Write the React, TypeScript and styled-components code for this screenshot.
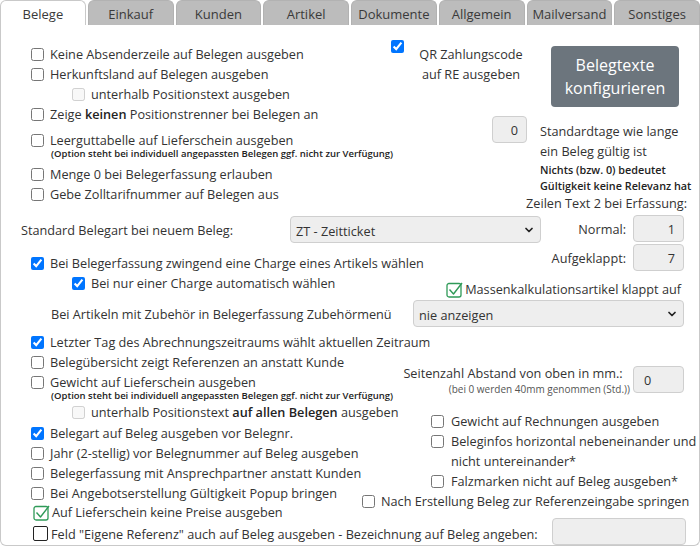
import React from "react";
import styled, { createGlobalStyle } from "styled-components";
import { ChevronDown } from "lucide-react";

const Global = createGlobalStyle`
  html, body { margin: 0; padding: 0; background: #fff; }
  body {
    font-family: "Open Sans", "Liberation Sans", sans-serif;
    font-size: 12.7px;
    color: #333;
  }
  * { box-sizing: border-box; }
`;

const Frame = styled.div`
  width: 700px;
  height: 546px;
  display: flex;
  flex-direction: column;
  overflow: hidden;
`;

const TabBar = styled.div`
  display: flex;
  gap: 2px;
  height: 25px;
  flex: none;
`;

const Tab = styled.div<{ $active?: boolean }>`
  flex: 1;
  display: flex;
  align-items: center;
  justify-content: center;
  border: 1px solid ${(p) => (p.$active ? "#c9c9c9" : "#b2b2b2")};
  border-bottom: none;
  border-radius: 6px 6px 0 0;
  background: ${(p) => (p.$active ? "#fff" : "#bcbcbc")};
  color: #3a3a3a;
  font-size: 13px;
  padding-top: 1px;
`;

const Panel = styled.div`
  flex: 1;
  border: 1px solid #c9c9c9;
  border-top: none;
  border-radius: 0 0 6px 6px;
  display: flex;
  flex-direction: column;
`;

const SplitBand = styled.div<{ $cols: string }>`
  display: grid;
  grid-template-columns: ${(p) => p.$cols};
  align-items: start;
`;

const Column = styled.div<{ $pt?: number }>`
  display: flex;
  flex-direction: column;
  padding-top: ${(p) => p.$pt ?? 0}px;
  min-width: 0;
`;

const CheckRow = styled.label<{ $indent?: number; $mt?: number; $gap?: number }>`
  display: flex;
  align-items: flex-start;
  gap: ${(p) => p.$gap ?? 6}px;
  padding-left: ${(p) => p.$indent ?? 30}px;
  margin-top: ${(p) => p.$mt ?? 0}px;
  line-height: 20px;
  white-space: nowrap;
`;

const Box = styled.input.attrs({ type: "checkbox" })`
  margin: 4px 0 0 0;
  width: 13px;
  height: 13px;
  flex: none;
`;

const Strong = styled.b`
  font-weight: 600;
  color: #222;
`;

const Note = styled.div<{ $indent?: number; $mt?: number }>`
  padding-left: ${(p) => p.$indent ?? 50}px;
  margin-top: ${(p) => p.$mt ?? -2}px;
  font-size: 9.5px;
  font-weight: 600;
  line-height: 11px;
  color: #222;
  white-space: nowrap;
`;

const QrRow = styled.div`
  display: flex;
  align-items: flex-start;
`;

const QrBox = styled(Box)`
  margin-top: 15px;
`;

const QrText = styled.div`
  width: 124px;
  margin-left: 5px;
  padding-top: 19px;
  line-height: 20px;
  text-align: center;
`;

const ConfigButton = styled.button`
  margin: 21px 0 0 18px;
  width: 128px;
  height: 61px;
  border: none;
  border-radius: 4px;
  background: #6c757d;
  color: #fff;
  font-family: inherit;
  font-size: 16px;
  line-height: 23px;
  padding: 0;
`;

const InfoRow = styled.div`
  display: flex;
  align-items: flex-start;
  margin-top: 9px;
`;

const NumInput = styled.input<{ $w: number; $left?: boolean }>`
  width: ${(p) => p.$w}px;
  height: 27px;
  flex: none;
  border: 1px solid #cfcfcf;
  border-radius: 4px;
  background: #eeeeee;
  font-family: inherit;
  font-size: 12.7px;
  color: #333;
  text-align: ${(p) => (p.$left ? "left" : "right")};
  padding: ${(p) => (p.$left ? "0 0 0 10px" : "0 8px 0 0")};
  margin: 0;
`;

const InfoInput = styled(NumInput)`
  margin-left: 101px;
`;

const InfoText = styled.div`
  margin-left: 13px;
  padding-top: 5px;
  line-height: 20px;
  white-space: nowrap;
`;

const InfoSmall = styled.div`
  font-size: 10.8px;
  font-weight: 600;
  line-height: 16px;
  color: #222;
  padding-top: 1px;
  margin-bottom: -1px;
`;

const RightLine = styled.div`
  text-align: right;
  padding-right: 12px;
  line-height: 20px;
  white-space: nowrap;
`;

const FieldRow = styled.div<{ $mt?: number }>`
  display: flex;
  align-items: center;
  justify-content: flex-end;
  gap: 7px;
  padding-right: 15px;
  margin-top: ${(p) => p.$mt ?? 0}px;
`;

const SelectLine = styled.div<{ $mt?: number; $indent: number }>`
  display: flex;
  align-items: center;
  padding-left: ${(p) => p.$indent}px;
  padding-right: 15px;
  margin-top: ${(p) => p.$mt ?? 0}px;
  white-space: nowrap;
`;

const SelectLabel = styled.span<{ $w?: number }>`
  flex: ${(p) => (p.$w ? "none" : "1")};
  width: ${(p) => (p.$w ? `${p.$w}px` : "auto")};
`;

const SelectWrap = styled.div<{ $w: number }>`
  position: relative;
  width: ${(p) => p.$w}px;
  height: 27px;
  flex: none;
`;

const Select = styled.select`
  appearance: none;
  width: 100%;
  height: 100%;
  margin: 0;
  border: 1px solid #cfcfcf;
  border-radius: 4px;
  background: #eeeeee;
  font-family: inherit;
  font-size: 12.7px;
  color: #333;
  padding: 2px 0 0 5px;
`;

const Chevron = styled(ChevronDown)`
  position: absolute;
  right: 6px;
  top: 8px;
  pointer-events: none;
  color: #222;
`;

const SplitRow = styled.div`
  display: flex;
  justify-content: space-between;
  align-items: flex-start;
`;

const GreenRow = styled.label<{ $mt?: number; $indent?: number; $right?: number }>`
  display: flex;
  align-items: center;
  gap: 2px;
  margin-top: ${(p) => p.$mt ?? 0}px;
  padding-left: ${(p) => p.$indent ?? 0}px;
  padding-right: ${(p) => p.$right ?? 0}px;
  height: 17px;
  line-height: 17px;
  white-space: nowrap;
`;

const PlainBox = styled.span`
  width: 15px;
  height: 15px;
  flex: none;
  border: 1.5px solid #222;
  border-radius: 2px;
  margin-right: 1px;
`;

const SeitenRow = styled.div`
  display: flex;
  justify-content: flex-end;
  align-items: flex-start;
  gap: 7px;
  padding-right: 15px;
  margin-top: 11px;
`;

const SeitenLabel = styled.div`
  text-align: right;
  white-space: nowrap;
  line-height: 20px;
`;

const SeitenNote = styled.div`
  font-size: 10px;
  line-height: 12px;
  margin-top: 0;
  margin-right: -4px;
  color: #555;
`;

const SeitenInput = styled(NumInput)`
  margin-top: 3px;
`;

const BottomRow = styled.div`
  display: flex;
  align-items: center;
  justify-content: space-between;
  height: 28px;
  margin-top: -4px;
  padding-right: 13px;
`;

const BottomLabel = styled.label`
  display: flex;
  align-items: center;
  gap: 2px;
  padding: 5px 0 0 32px;
  white-space: nowrap;
`;

const GreenCheck = () => (
  <svg width="17" height="17" viewBox="0 0 17 17" style={{ flex: "none" }}>
    <rect x="1" y="2.5" width="14" height="13.5" rx="2" fill="none" stroke="#2f9a58" strokeWidth="1.3" />
    <polyline points="3.5,8.5 7.5,13 16,2" fill="none" stroke="#2f9a58" strokeWidth="1.4" strokeLinejoin="round" />
  </svg>
);

const tabs = ["Belege", "Einkauf", "Kunden", "Artikel", "Dokumente", "Allgemein", "Mailversand", "Sonstiges"];

export default function App() {
  return (
    <>
      <Global />
      <Frame>
        <TabBar>
          {tabs.map((t, i) => (
            <Tab key={t} $active={i === 0}>
              {t}
            </Tab>
          ))}
        </TabBar>
        <Panel>
          <SplitBand $cols="390px 1fr">
            <Column $pt={19}>
              <CheckRow><Box />Keine Absenderzeile auf Belegen ausgeben</CheckRow>
              <CheckRow><Box />Herkunftsland auf Belegen ausgeben</CheckRow>
              <CheckRow $indent={71}><Box disabled />unterhalb Positionstext ausgeben</CheckRow>
              <CheckRow><Box /><span>Zeige <Strong>keinen</Strong> Positionstrenner bei Belegen an</span></CheckRow>
              <CheckRow $mt={6}><Box />Leerguttabelle auf Lieferschein ausgeben</CheckRow>
              <Note>(Option steht bei individuell angepassten Belegen ggf. nicht zur Verfügung)</Note>
              <CheckRow $mt={5}><Box />Menge 0 bei Belegerfassung erlauben</CheckRow>
              <CheckRow><Box />Gebe Zolltarifnummer auf Belegen aus</CheckRow>
            </Column>
            <Column>
              <QrRow>
                <QrBox defaultChecked />
                <QrText>QR Zahlungscode<br />auf RE ausgeben</QrText>
                <ConfigButton>Belegtexte<br />konfigurieren</ConfigButton>
              </QrRow>
              <InfoRow>
                <InfoInput $w={35} defaultValue="0" />
                <InfoText>
                  Standardtage wie lange<br />
                  ein Beleg gültig ist
                  <InfoSmall>Nichts (bzw. 0) bedeutet<br />Gültigkeit keine Relevanz hat</InfoSmall>
                </InfoText>
              </InfoRow>
              <RightLine>Zeilen Text 2 bei Erfassung:</RightLine>
            </Column>
          </SplitBand>

          <SplitBand $cols="1fr 158px">
            <Column>
              <SelectLine $indent={20} $mt={3}>
                <SelectLabel $w={269}>Standard Belegart bei neuem Beleg:</SelectLabel>
                <SelectWrap $w={251}>
                  <Select defaultValue="zt">
                    <option value="zt">ZT - Zeitticket</option>
                  </Select>
                  <Chevron size={12} strokeWidth={3.5} />
                </SelectWrap>
              </SelectLine>
              <CheckRow $mt={10}><Box defaultChecked />Bei Belegerfassung zwingend eine Charge eines Artikels wählen</CheckRow>
            </Column>
            <Column>
              <FieldRow $mt={2}>Normal:<NumInput $w={51} defaultValue="1" /></FieldRow>
              <FieldRow $mt={2}>Aufgeklappt:<NumInput $w={51} defaultValue="7" /></FieldRow>
            </Column>
          </SplitBand>

          <SplitRow>
            <CheckRow $indent={71}><Box defaultChecked />Bei nur einer Charge automatisch wählen</CheckRow>
            <GreenRow $mt={8} $right={18}><GreenCheck />Massenkalkulationsartikel klappt auf</GreenRow>
          </SplitRow>

          <SelectLine $indent={50} $mt={2}>
            <SelectLabel>Bei Artikeln mit Zubehör in Belegerfassung Zubehörmenü</SelectLabel>
            <SelectWrap $w={271}>
              <Select defaultValue="nie">
                <option value="nie">nie anzeigen</option>
              </Select>
              <Chevron size={12} strokeWidth={3.5} />
            </SelectWrap>
          </SelectLine>

          <CheckRow $mt={5}><Box defaultChecked />Letzter Tag des Abrechnungszeitraums wählt aktuellen Zeitraum</CheckRow>

          <SplitBand $cols="359px 1fr">
            <Column>
              <CheckRow><Box />Belegübersicht zeigt Referenzen an anstatt Kunde</CheckRow>
              <CheckRow><Box />Gewicht auf Lieferschein ausgeben</CheckRow>
              <Note $mt={-2}>(Option steht bei individuell angepassten Belegen ggf. nicht zur Verfügung)</Note>
              <CheckRow $indent={71} $mt={1}><Box disabled /><span>unterhalb Positionstext <Strong>auf allen Belegen</Strong> ausgeben</span></CheckRow>
              <CheckRow $mt={1}><Box defaultChecked />Belegart auf Beleg ausgeben vor Belegnr.</CheckRow>
              <CheckRow><Box />Jahr (2-stellig) vor Belegnummer auf Beleg ausgeben</CheckRow>
              <CheckRow><Box />Belegerfassung mit Ansprechpartner anstatt Kunden</CheckRow>
              <CheckRow><Box />Bei Angebotserstellung Gültigkeit Popup bringen</CheckRow>
              <GreenRow $indent={32} $mt={1}><GreenCheck />Auf Lieferschein keine Preise ausgeben</GreenRow>
            </Column>
            <Column>
              <SeitenRow>
                <SeitenLabel>
                  Seitenzahl Abstand von oben in mm.:&nbsp;
                  <SeitenNote>(bei 0 werden 40mm genommen (Std.))</SeitenNote>
                </SeitenLabel>
                <SeitenInput $w={51} $left defaultValue="0" />
              </SeitenRow>
              <CheckRow $indent={71} $gap={7} $mt={16}><Box />Gewicht auf Rechnungen ausgeben</CheckRow>
              <CheckRow $indent={71} $gap={7}><Box /><span>Beleginfos horizontal nebeneinander und<br />nicht untereinander*</span></CheckRow>
              <CheckRow $indent={71} $gap={7}><Box />Falzmarken nicht auf Beleg ausgeben*</CheckRow>
              <CheckRow $indent={2}><Box />Nach Erstellung Beleg zur Referenzeingabe springen</CheckRow>
            </Column>
          </SplitBand>

          <BottomRow>
            <BottomLabel><PlainBox />Feld "Eigene Referenz" auch auf Beleg ausgeben - Bezeichnung auf Beleg angeben:</BottomLabel>
            <NumInput $w={134} defaultValue="" />
          </BottomRow>
        </Panel>
      </Frame>
    </>
  );
}
